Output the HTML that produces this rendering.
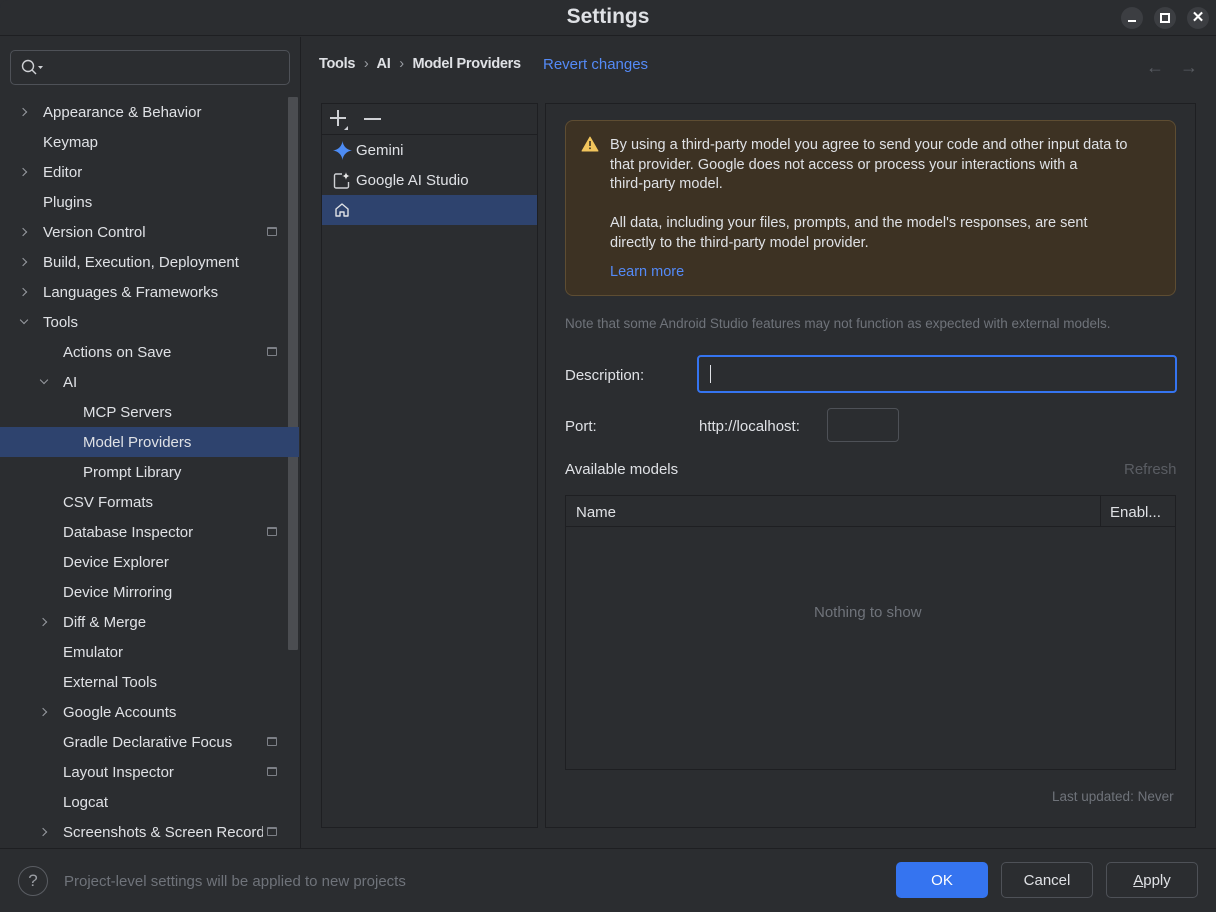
<!DOCTYPE html>
<html><head><style>
*{box-sizing:border-box;margin:0;padding:0}
body{width:1216px;height:912px;background:#2b2d30;font-family:"Liberation Sans",sans-serif;font-size:15px;color:#dfe1e5;position:relative;overflow:hidden}
.a{position:absolute;white-space:nowrap}
.tb{left:0;top:0;width:1216px;height:36px;border-bottom:1px solid #1e1f22;background:#2b2d30;border-radius:8px 8px 0 0}
.wb{width:22px;height:22px;border-radius:11px;background:#3c3e42;top:7px}
.row{height:30px;line-height:32px}
.chev{display:block;width:6px;height:6px;border-right:1.3px solid #9a9da3;border-bottom:1.3px solid #9a9da3;transform:rotate(-45deg);margin-top:12px}
.chev.d{transform:rotate(45deg);margin-top:10px}
.pin{width:10px;height:9px;border:1px solid #7d8087;border-top-width:2px;border-radius:1px}
.btn{height:36px;border:1px solid #4e5157;border-radius:5px;line-height:36px;text-align:center;top:862px}
</style></head><body>
<div class="a tb"></div>
<div class="a" style="left:0;top:5px;width:1216px;text-align:center;font-size:21px;font-weight:bold;color:#dfe1e5">Settings</div>
<div class="a wb" style="left:1121px"><div class="a" style="left:7px;top:13px;width:8px;height:2px;background:#fff"></div></div>
<div class="a wb" style="left:1154px"><div class="a" style="left:6px;top:6px;width:10px;height:10px;border:2px solid #fff"></div></div>
<div class="a wb" style="left:1187px;color:#fff;font-weight:bold;text-align:center;line-height:22px;font-size:15px">✕</div>

<div class="a" style="left:300px;top:37px;width:1px;height:811px;background:#1e1f22"></div>
<div class="a" style="left:10px;top:50px;width:280px;height:35px;border:1px solid #4e5157;border-radius:5px"></div>
<svg class="a" style="left:20px;top:58px" width="26" height="18"><circle cx="8" cy="8" r="5.5" fill="none" stroke="#cfd1d5" stroke-width="1.4"/><line x1="12" y1="12" x2="16" y2="16" stroke="#cfd1d5" stroke-width="1.4"/><path d="M18 8h5l-2.5 3z" fill="#cfd1d5"/></svg>
<div class="a" style="left:288px;top:97px;width:10px;height:553px;background:#4b4d51;border-radius:1px"></div>
<div class="a" style="left:0;top:427px;width:299px;height:30px;background:#2e436e"></div>
<div class="a" style="left:0;top:97px;width:290px">
<div class="a row" style="top:0;left:20px"><span class="chev"></span></div><div class="a row" style="top:0;left:43px">Appearance &amp; Behavior</div>
<div class="a row" style="top:30px;left:43px">Keymap</div>
<div class="a row" style="top:60px;left:20px"><span class="chev"></span></div><div class="a row" style="top:60px;left:43px">Editor</div>
<div class="a row" style="top:90px;left:43px">Plugins</div>
<div class="a row" style="top:120px;left:20px"><span class="chev"></span></div><div class="a row" style="top:120px;left:43px">Version Control</div><div class="a pin" style="left:267px;top:130px"></div>
<div class="a row" style="top:150px;left:20px"><span class="chev"></span></div><div class="a row" style="top:150px;left:43px">Build, Execution, Deployment</div>
<div class="a row" style="top:180px;left:20px"><span class="chev"></span></div><div class="a row" style="top:180px;left:43px">Languages &amp; Frameworks</div>
<div class="a row" style="top:210px;left:21px"><span class="chev d"></span></div><div class="a row" style="top:210px;left:43px">Tools</div>
<div class="a row" style="top:240px;left:63px">Actions on Save</div><div class="a pin" style="left:267px;top:250px"></div>
<div class="a row" style="top:270px;left:41px"><span class="chev d"></span></div><div class="a row" style="top:270px;left:63px">AI</div>
<div class="a row" style="top:300px;left:83px">MCP Servers</div>
<div class="a row" style="top:330px;left:83px">Model Providers</div>
<div class="a row" style="top:360px;left:83px">Prompt Library</div>
<div class="a row" style="top:390px;left:63px">CSV Formats</div>
<div class="a row" style="top:420px;left:63px">Database Inspector</div><div class="a pin" style="left:267px;top:430px"></div>
<div class="a row" style="top:450px;left:63px">Device Explorer</div>
<div class="a row" style="top:480px;left:63px">Device Mirroring</div>
<div class="a row" style="top:510px;left:40px"><span class="chev"></span></div><div class="a row" style="top:510px;left:63px">Diff &amp; Merge</div>
<div class="a row" style="top:540px;left:63px">Emulator</div>
<div class="a row" style="top:570px;left:63px">External Tools</div>
<div class="a row" style="top:600px;left:40px"><span class="chev"></span></div><div class="a row" style="top:600px;left:63px">Google Accounts</div>
<div class="a row" style="top:630px;left:63px">Gradle Declarative Focus</div><div class="a pin" style="left:267px;top:640px"></div>
<div class="a row" style="top:660px;left:63px">Layout Inspector</div><div class="a pin" style="left:267px;top:670px"></div>
<div class="a row" style="top:690px;left:63px">Logcat</div>
<div class="a row" style="top:720px;left:40px"><span class="chev"></span></div><div class="a row" style="top:720px;left:63px;width:200px;overflow:hidden">Screenshots &amp; Screen Recording</div><div class="a pin" style="left:267px;top:730px"></div>
</div>

<div class="a" style="left:319px;top:56px;font-weight:bold;font-size:14.5px;letter-spacing:-0.3px">Tools <span style="color:#9a9da3;font-weight:normal;margin:0 5px">›</span> AI <span style="color:#9a9da3;font-weight:normal;margin:0 5px">›</span> Model Providers</div>
<div class="a" style="left:543px;top:56px;color:#548af7">Revert changes</div>
<div class="a" style="left:1146px;top:57px;color:#5a5d63;font-size:18px">←</div>
<div class="a" style="left:1180px;top:57px;color:#5a5d63;font-size:18px">→</div>

<div class="a" style="left:321px;top:103px;width:217px;height:725px;border:1px solid #1e1f22"></div>
<div class="a" style="left:322px;top:134px;width:215px;height:1px;background:#1e1f22"></div>
<div class="a" style="left:330px;top:117px;width:16px;height:1.5px;background:#cfd1d5"></div>
<div class="a" style="left:337.3px;top:110px;width:1.5px;height:16px;background:#cfd1d5"></div>
<div class="a" style="left:344px;top:126px;border-left:4px solid transparent;border-bottom:4px solid #cfd1d5"></div>
<div class="a" style="left:364px;top:118px;width:17px;height:1.5px;background:#cfd1d5"></div>
<svg class="a" style="left:333px;top:141px" width="19" height="19"><path d="M9.5 0C10 5 14 9 19 9.5 14 10 10 14 9.5 19 9 14 5 10 0 9.5 5 9 9 5 9.5 0z" fill="#4d8cf5"/></svg>
<div class="a row" style="left:356px;top:135px">Gemini</div>
<svg class="a" style="left:333px;top:171px" width="18" height="19"><path d="M9 3H3a1.5 1.5 0 0 0-1.5 1.5v11A1.5 1.5 0 0 0 3 17h11a1.5 1.5 0 0 0 1.5-1.5V11" fill="none" stroke="#cfd1d5" stroke-width="1.4"/><path d="M13 1c.3 2.5 1.5 3.7 4 4-2.5.3-3.7 1.5-4 4-.3-2.5-1.5-3.7-4-4 2.5-.3 3.7-1.5 4-4z" fill="#e6e6e6"/></svg>
<div class="a row" style="left:356px;top:165px">Google AI Studio</div>
<div class="a" style="left:322px;top:195px;width:215px;height:30px;background:#2e436e"></div>
<svg class="a" style="left:334px;top:202px" width="16" height="16"><path d="M2 14V7L8 2l6 5v7h-4v-4H6v4z" fill="none" stroke="#dfe1e5" stroke-width="1.4" stroke-linejoin="round"/></svg>

<div class="a" style="left:545px;top:103px;width:651px;height:725px;border:1px solid #1e1f22"></div>
<div class="a" style="left:565px;top:120px;width:611px;height:176px;background:#3d3223;border:1px solid #5e4d32;border-radius:8px"></div>
<svg class="a" style="left:581px;top:136px" width="18" height="16"><path d="M9 1L17 15H1z" fill="#f2c55c" stroke="#f2c55c" stroke-linejoin="round"/><rect x="8.2" y="5" width="1.6" height="5" fill="#3d3223"/><rect x="8.2" y="11.5" width="1.6" height="1.6" fill="#3d3223"/></svg>
<div class="a" style="left:610px;top:136px;line-height:19.5px;font-size:14.5px">By using a third-party model you agree to send your code and other input data to<br>that provider. Google does not access or process your interactions with a<br>third-party model.<br><br>All data, including your files, prompts, and the model's responses, are sent<br>directly to the third-party model provider.</div>
<div class="a" style="left:610px;top:264px;color:#548af7;font-size:14.5px">Learn more</div>
<div class="a" style="left:565px;top:316px;color:#6f737a;font-size:13.5px">Note that some Android Studio features may not function as expected with external models.</div>
<div class="a" style="left:565px;top:367px">Description:</div>
<div class="a" style="left:697px;top:355px;width:480px;height:38px;border:2px solid #3574f0;border-radius:4px"></div>
<div class="a" style="left:710px;top:365px;width:1px;height:18px;background:#dfe1e5"></div>
<div class="a" style="left:565px;top:418px">Port:</div>
<div class="a" style="left:699px;top:418px">http://localhost:</div>
<div class="a" style="left:827px;top:408px;width:72px;height:34px;border:1px solid #4e5157;border-radius:4px"></div>
<div class="a" style="left:565px;top:461px">Available models</div>
<div class="a" style="left:1124px;top:461px;color:#5a5d63">Refresh</div>
<div class="a" style="left:565px;top:495px;width:611px;height:275px;border:1px solid #1e1f22"></div>
<div class="a" style="left:566px;top:526px;width:609px;height:1px;background:#1e1f22"></div>
<div class="a" style="left:1100px;top:496px;width:1px;height:30px;background:#1e1f22"></div>
<div class="a" style="left:576px;top:504px">Name</div>
<div class="a" style="left:1110px;top:504px">Enabl...</div>
<div class="a" style="left:814px;top:604px;color:#6f737a">Nothing to show</div>
<div class="a" style="left:1052px;top:789px;color:#6f737a;font-size:13.5px">Last updated: Never</div>

<div class="a" style="left:0;top:848px;width:1216px;height:1px;background:#1e1f22"></div>
<div class="a" style="left:18px;top:866px;width:30px;height:30px;border:1px solid #5a5d63;border-radius:15px;text-align:center;line-height:28px;color:#9a9da3;font-size:17px">?</div>
<div class="a" style="left:64px;top:873px;color:#6f737a">Project-level settings will be applied to new projects</div>
<div class="a btn" style="left:896px;width:92px;background:#3574f0;border-color:#3574f0;color:#fff">OK</div>
<div class="a btn" style="left:1001px;width:92px">Cancel</div>
<div class="a btn" style="left:1106px;width:92px"><u>A</u>pply</div>
</body></html>
